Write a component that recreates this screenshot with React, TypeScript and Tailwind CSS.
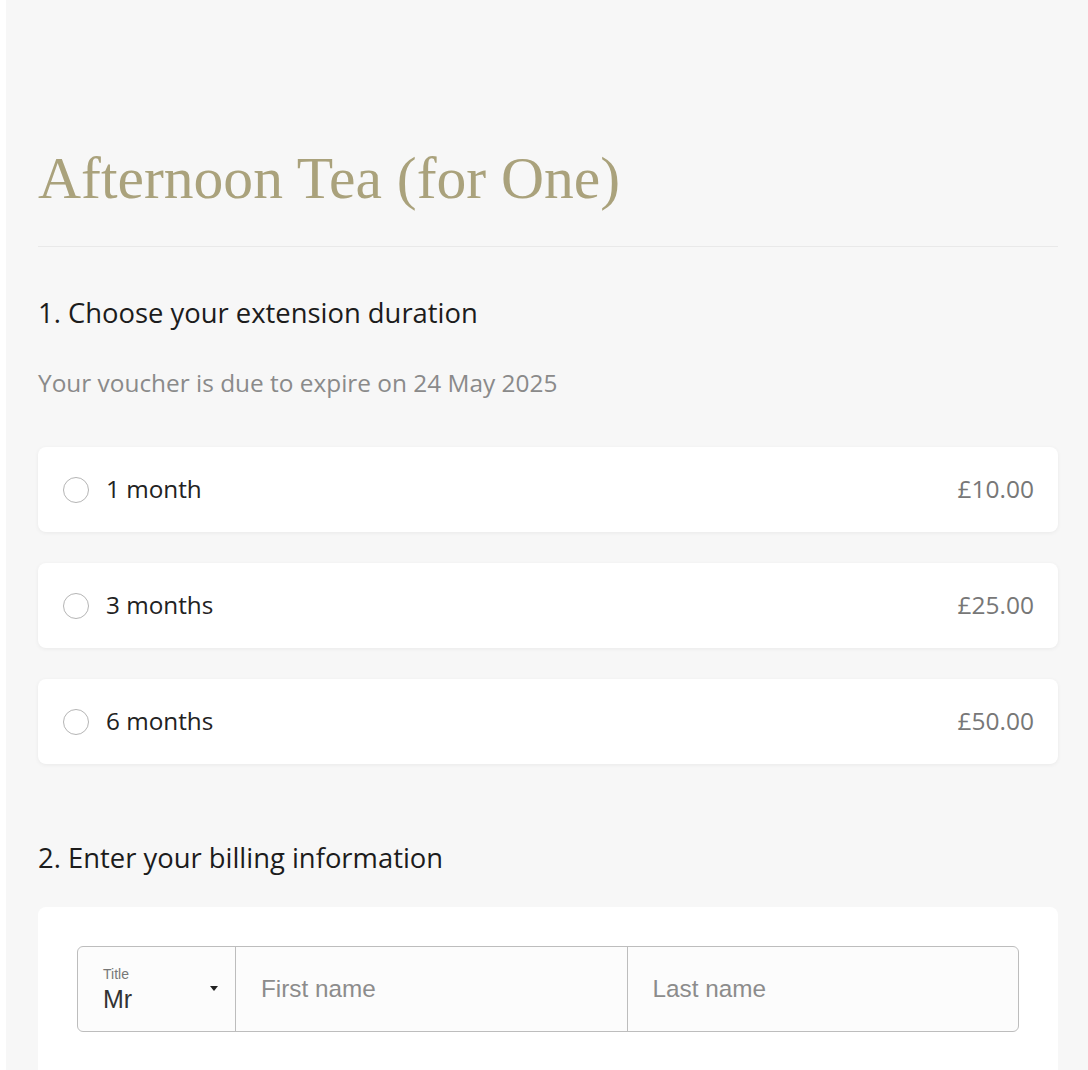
const OPTIONS = [
  { id: "1m", label: "1 month", price: "£10.00" },
  { id: "3m", label: "3 months", price: "£25.00" },
  { id: "6m", label: "6 months", price: "£50.00" },
];

const sans = "font-['Open_Sans','Noto_Sans',sans-serif]";

export default function App() {
  return (
    <div className="min-h-screen bg-white">
      <div className="ml-[6px] min-h-screen bg-[#f7f7f7] pl-[32px] pr-[30px] pt-[141px]">
        {/* title */}
        <h1 className="font-['Liberation_Serif','DejaVu_Serif',serif] text-[59.6px] leading-[74px] text-[#aaa27c]">
          Afternoon Tea (for One)
        </h1>
        <div className="mt-[31px] h-px bg-[#e9e9e9]" />

        {/* step 1 */}
        <h2 className={`${sans} mt-[46px] text-[27.4px] leading-[40px] text-[#1c1c1c]`}>
          1. Choose your extension duration
        </h2>
        <p className={`${sans} mt-[33px] text-[24.4px] leading-[34px] text-[#8a8a8a]`}>
          Your voucher is due to expire on 24 May 2025
        </p>

        <div className="mt-[47px] flex flex-col gap-[31px]">
          {OPTIONS.map((o) => (
            <label
              key={o.id}
              className="flex h-[85px] cursor-pointer items-center rounded-[8px] bg-white pl-[25px] pr-[24px] shadow-[0_1px_4px_rgba(0,0,0,0.06)]"
            >
              <input type="radio" name="duration" className="peer sr-only" />
              <span className="h-[26px] w-[26px] rounded-full border-[1.5px] border-[#b5b5b5] bg-white" />
              <span className={`${sans} ml-[17px] text-[24.3px] text-[#222]`}>{o.label}</span>
              <span className={`${sans} ml-auto text-[24.5px] text-[#777]`}>{o.price}</span>
            </label>
          ))}
        </div>

        {/* step 2 */}
        <h2 className={`${sans} mt-[74px] text-[27.4px] leading-[40px] text-[#1c1c1c]`}>
          2. Enter your billing information
        </h2>

        <div className="mt-[29px] rounded-t-[8px] bg-white px-[39px] pb-[60px] pt-[39px]">
          <div className="flex h-[86px] overflow-hidden rounded-[6px] border-[1.5px] border-[#bdbdbd] bg-[#fcfcfc] font-['Liberation_Sans',Arial,sans-serif]">
            <div className="relative flex w-[158px] flex-col justify-center border-r-[1.5px] border-[#bdbdbd] pl-[25px]">
              <span className="text-[14px] leading-[16px] text-[#777]">Title</span>
              <span className="mt-[3px] text-[25px] leading-[28px] text-[#333]">Mr</span>
              <svg className="absolute right-[17px] top-[39px]" width="8" height="5" viewBox="0 0 8 5">
                <path d="M0 0h8L4 5z" fill="#222" />
              </svg>
            </div>
            <div className="flex flex-1 items-center border-r-[1.5px] border-[#bdbdbd] pl-[25px] text-[24.3px] text-[#8c8c8c]">
              First name
            </div>
            <div className="flex flex-1 items-center pl-[25px] text-[24.3px] text-[#8c8c8c]">
              Last name
            </div>
          </div>
        </div>
      </div>
    </div>
  );
}
